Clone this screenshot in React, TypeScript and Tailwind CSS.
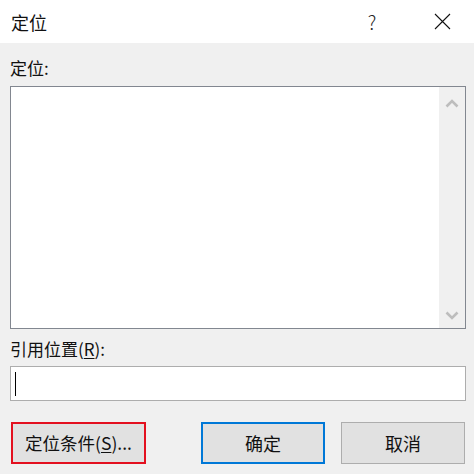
import React from "react";

const font = { fontFamily: '"Noto Sans CJK SC", "Noto Sans", sans-serif' };

const Chevron = ({ up }: { up: boolean }) => (
  <svg width="14" height="9" viewBox="0 0 14 9">
    <polyline
      points={up ? "1.5,7.5 7,2 12.5,7.5" : "1.5,1.5 7,7 12.5,1.5"}
      fill="none"
      stroke="#bdbdbd"
      strokeWidth="2.6"
    />
  </svg>
);

const App = () => {
  return (
    <div
      className="w-[474px] h-[474px] bg-[#f0f0f0] flex flex-col text-black overflow-hidden"
      style={font}
    >
      {/* title bar */}
      <div className="h-[43px] bg-white flex items-center shrink-0">
        <div className="pl-[11px] text-[18px] leading-none text-[#111]">定位</div>
        <div className="ml-auto w-[20px] text-center text-[19px] font-light leading-none text-[#222]">
          ?
        </div>
        <div className="ml-[52px] mr-[23px] flex items-center">
          <svg width="17" height="17" viewBox="0 0 17 17">
            <path d="M1 1 L16 16 M16 1 L1 16" stroke="#111" strokeWidth="1.1" />
          </svg>
        </div>
      </div>

      <div className="pl-[10px] pr-[8px] flex flex-col">
        <div className="mt-[13px] h-[24px] text-[17px] leading-[24px] text-[#111]">定位:</div>

        {/* list box */}
        <div className="mt-[6px] h-[243px] border border-[#828790] bg-white flex">
          <div className="flex-1" />
          <div className="w-[26px] bg-[#f0f0f0] flex flex-col items-center justify-between pt-[12px] pb-[8px]">
            <Chevron up />
            <Chevron up={false} />
          </div>
        </div>

        <div className="mt-[8px] h-[24px] text-[17px] leading-[24px] text-[#111]">
          引用位置(<span className="underline underline-offset-2">R</span>):
        </div>

        {/* reference input */}
        <div className="mt-[5px] h-[35px] border border-[#adadad] bg-white flex items-center pl-[4px]">
          <div className="w-px h-[24px] bg-black" />
        </div>
      </div>

      {/* buttons */}
      <div className="mt-[21px] pl-[11px] flex text-[#111]">
        <button className="w-[135px] h-[42px] border-2 border-[#e3101f] bg-[#e1e1e1] text-[17.5px] flex items-center justify-center">
          定位条件(<span className="underline underline-offset-2">S</span>)...
        </button>
        <button className="ml-[55px] w-[124px] h-[42px] border-2 border-[#0078d7] bg-[#e1e1e1] text-[18px] flex items-center justify-center">
          确定
        </button>
        <button className="ml-[16px] w-[124px] h-[42px] border border-[#adadad] bg-[#e1e1e1] text-[18px] flex items-center justify-center">
          取消
        </button>
      </div>
    </div>
  );
};

export default App;
